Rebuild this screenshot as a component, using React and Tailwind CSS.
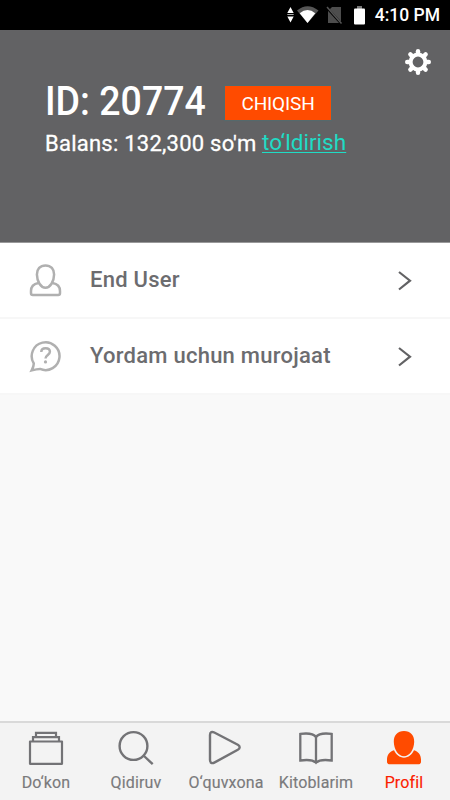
const tabs = [
  { label: 'Do‘kon', icon: ShopIcon },
  { label: 'Qidiruv', icon: SearchIcon },
  { label: 'O‘quvxona', icon: PlayIcon },
  { label: 'Kitoblarim', icon: BookIcon },
  { label: 'Profil', icon: ProfileIcon, active: true },
];

const rows = [
  { label: 'End User', icon: UserIcon },
  { label: 'Yordam uchun murojaat', icon: HelpIcon },
];

function ShopIcon() {
  return (
    <svg width="36" height="36" viewBox="0 0 36 36" fill="none" stroke="currentColor" strokeWidth="2.2">
      <path d="M2 11.5h32v22.3H2z" strokeLinejoin="round" />
      <path d="M5 11V7.2h26V11M8 7V2.8h20V7" />
    </svg>
  );
}

function SearchIcon() {
  return (
    <svg width="36" height="36" viewBox="0 0 36 36" fill="none" stroke="currentColor" strokeWidth="2.4">
      <circle cx="15.5" cy="16" r="13.9" />
      <path d="M25.500 25.500l9.200 8.700" />
    </svg>
  );
}

function PlayIcon() {
  return (
    <svg width="36" height="36" viewBox="0 0 36 36" fill="none" stroke="currentColor" strokeWidth="2.4">
      <path d="M2 5v25c0 3 2 3.800 4.300 2.600l23.500-12.900c2.500-1.500 2.500-3.600 0-5L6.300 2.500C4 1.300 2 2 2 5z" />
    </svg>
  );
}

function BookIcon() {
  return (
    <svg width="36" height="36" viewBox="0 0 36 36" fill="none" stroke="currentColor" strokeWidth="2.3">
      <path d="M18 7C15.500 3.500 9.300 3 2.300 3.900v26.600c7-1 12.700-.7 15.700 2.300 3-3 8.700-3.300 15.700-2.300V3.900C26.700 3 20.500 3.500 18 7z" />
      <path d="M18 7v26" />
    </svg>
  );
}

function ProfileIcon() {
  return (
    <svg width="36" height="36" viewBox="0 0 36 36" fill="currentColor">
      <path d="M18 1.100c6.500 0 10.300 4.200 10.200 10.700C28.100 19.500 23.500 26.300 18 26.300S7.900 19.500 7.800 11.800C7.700 5.300 11.500 1.100 18 1.100z" />
      <path d="M8 20.300C10 24.600 13.500 27.700 18 27.700s8-3.100 10-7.400c4.100 1.100 7 4.500 7 9.400v1.700c0 2-1 2.900-2.900 2.900H3.900C2 34.300 1 33.400 1 31.400v-1.700c0-4.900 2.900-8.300 7-9.400z" />
    </svg>
  );
}

function UserIcon() {
  return (
    <svg width="34" height="34" viewBox="0 0 34 34" fill="none" stroke="currentColor" strokeWidth="2.500">
      <path d="M17.500 2.400c5.400 0 8.700 3.600 8.600 9.200-.1 6.900-3.900 13.100-8.600 13.100s-8.500-6.200-8.600-13.100C8.800 6 12.100 2.400 17.500 2.400z" />
      <path d="M10.500 20C5.600 20.900 3 23.700 3 28v2.300c0 1 .8 1.700 1.800 1.700h25.400c1 0 1.800-.7 1.800-1.700V28c0-4.300-2.600-7.100-7.500-8" />
    </svg>
  );
}

function HelpIcon() {
  return (
    <svg width="34" height="34" viewBox="0 0 34 34" fill="none" stroke="currentColor" strokeWidth="2.500">
      <path d="M5.800 24.500A13.900 13.900 0 1 1 12 29.900c-2.500 0-5.100.6-8.300 1.500 1.400-2.800 2.100-4.800 2.100-6.900z" />
      <path d="M13.300 13c0-2.300 1.700-3.700 4.300-3.700s4.300 1.400 4.300 3.500c0 3.100-4.400 3.300-4.400 6.700" />
      <circle cx="17.500" cy="22.900" r="1.600" fill="currentColor" stroke="none" />
    </svg>
  );
}

function GearIcon() {
  const teeth = [0, 45, 90, 135, 180, 225, 270, 315];

  return (
    <svg width="26" height="26" viewBox="-13 -13 26 26" fill="none" stroke="currentColor">
      <circle r="7.400" strokeWidth="4" />
      {teeth.map(angle => (
        <path key={angle} d="M0-8.500V-10.800" strokeWidth="4.400" strokeLinecap="round" transform={`rotate(${angle})`} />
      ))}
    </svg>
  );
}

function StatusBar() {
  return (
    <div className="flex h-[30px] items-center justify-end bg-black pr-[10px] text-white">
      <svg width="84" height="30" viewBox="0 0 84 30">
        <path d="M4.500 7l3.200 6H1.300zM4.500 22.500l3.200-6H1.300z" fill="#fff" />
        <path d="M1.300 14.500h6.400" stroke="#aaa" />
        <path d="M11 10.500Q21.500 2 32.500 10.500L21.500 23z" fill="#565656" />
        <path d="M13.700 13.200Q21.500 7 29.300 13.200L21.500 23z" fill="#fff" />
        <path d="M46 7h9v16H42V11z" fill="#4d4d4d" />
        <path d="M41 8l15.500 17" stroke="#000" strokeWidth="2.500" />
        <path d="M41 7l14.500 16.500" stroke="#555" strokeWidth="1.500" />
        <path d="M71 6h5v3h-5z" fill="#777" />
        <rect x="68" y="8.500" width="11" height="16" rx="1" fill="#fff" />
      </svg>
      <span className="ml-[5px] text-[17.5px] leading-[31px] font-medium">4:10 PM</span>
    </div>
  );
}

export default function App() {
  return (
    <div className="flex h-[800px] w-[450px] flex-col overflow-hidden bg-[#f9f9f9] font-['Roboto',sans-serif]">
      <StatusBar />

      {/* Account summary */}
      <header className="flex h-[213px] flex-col border-b border-[#99999a] bg-[#626264] text-white">
        <div className="flex h-[50px] justify-end pt-[19px] pr-[19px]">
          <button className="h-[26px] w-[26px]"><GearIcon /></button>
        </div>
        <div className="flex h-[46px] pl-[45px]">
          <h1 className="w-[180px] shrink-0 origin-left scale-x-[0.937] text-[40px] leading-[44px] font-medium whitespace-nowrap">ID: 20774</h1>
          <button className="mt-[6px] h-[34px] w-[106px] bg-[#ff4b00] text-[19px] leading-[35px] tracking-[-0.15px] shadow-[0_0_1px_1px_#55696c]">CHIQISH</button>
        </div>
        <p className="flex pl-[45px] text-[22px] leading-[35px] whitespace-nowrap">
          <span className="w-[217px] tracking-[0.24px] [-webkit-text-stroke:0.3px_white]">Balans: 132,300 so'm</span>
          <a className="text-[22.5px] leading-[33px] tracking-[0.05px] text-[#1fdcc5] underline decoration-1 underline-offset-2">to‘ldirish</a>
        </p>
      </header>

      {/* Menu */}
      <main className="flex-1">
        {rows.map(({ label, icon: Icon }) => (
          <div key={label} className="flex h-[76px] border-b-2 border-[#f7f7f7] bg-white pl-[28px] text-[#6c6c6f]">
            <span className="mt-[20px] w-[62px] shrink-0 text-[#b0b0b0]"><Icon /></span>
            <span className="mt-[19px] flex-1 text-[22px] leading-[35px] font-medium tracking-[0.25px]">{label}</span>
            <svg className="mt-[27px] mr-[37px]" width="16" height="22" viewBox="0 0 16 22" fill="none" stroke="#626264" strokeWidth="2.200">
              <path d="M2 2l11 8.700L2 19.500" />
            </svg>
          </div>
        ))}
      </main>

      {/* Bottom tabs */}
      <nav className="grid h-[79px] grid-cols-5 border-t-2 border-[#d9d9d9] bg-[#f3f3f3]">
        {tabs.map(({ label, icon: Icon, active }) => (
          <div key={label} className={`flex flex-col items-center pt-[7px] ${active ? 'pr-[2px] text-[#ff4b00]' : 'pl-[2px] text-[#737376]'}`}>
            <Icon />
            <span className={`mt-[6px] text-[16px] leading-[22px] tracking-[0.15px] [-webkit-text-stroke:0.15px_currentColor] ${active ? 'text-[#fb1d00]' : 'text-[#7a7a7c]'}`}>{label}</span>
          </div>
        ))}
      </nav>
    </div>
  );
}
